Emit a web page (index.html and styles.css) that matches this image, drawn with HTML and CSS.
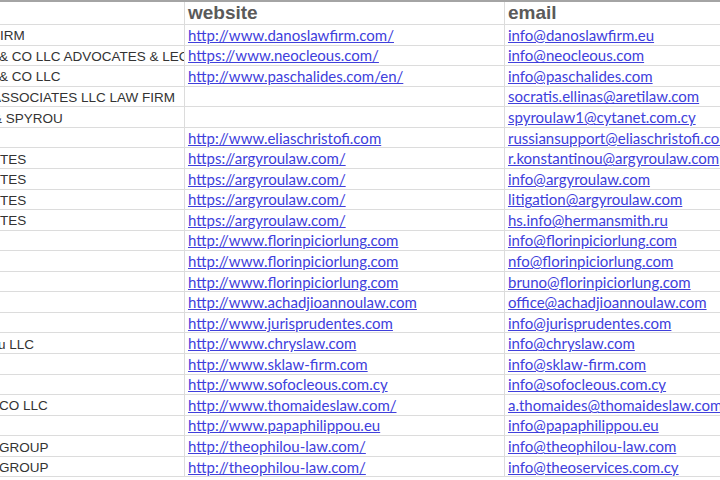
FILE: index.html
```html
<!DOCTYPE html>
<html>
<head>
<meta charset="utf-8">
<link rel="stylesheet" href="styles.css">
</head>
<body>
<div class="sheet">
  <div class="row head"><div class="cell name"></div><div class="cell site">website</div><div class="cell mail">email</div></div>
  <div class="row"><div class="cell name">IRM</div><div class="cell site"><a href="#">http://www.danoslawfirm.com/</a></div><div class="cell mail"><a href="#">info@danoslawfirm.eu</a></div></div>
  <div class="row"><div class="cell name"><span class="s1">&amp; CO LLC ADVOCATES &amp; LEG</span></div><div class="cell site"><a href="#">https://www.neocleous.com/</a></div><div class="cell mail"><a href="#">info@neocleous.com</a></div></div>
  <div class="row"><div class="cell name"><span class="s1">&amp; CO LLC</span></div><div class="cell site"><a href="#">http://www.paschalides.com/en/</a></div><div class="cell mail"><a href="#">info@paschalides.com</a></div></div>
  <div class="row"><div class="cell name"><span class="s8">ASSOCIATES LLC LAW FIRM</span></div><div class="cell site"></div><div class="cell mail"><a href="#">socratis.ellinas@aretilaw.com</a></div></div>
  <div class="row"><div class="cell name"><span class="s6">&amp; SPYROU</span></div><div class="cell site"></div><div class="cell mail"><a href="#">spyroulaw1@cytanet.com.cy</a></div></div>
  <div class="row"><div class="cell name"></div><div class="cell site"><a href="#">http://www.eliaschristofi.com</a></div><div class="cell mail"><a href="#">russiansupport@eliaschristofi.com</a></div></div>
  <div class="row"><div class="cell name">TES</div><div class="cell site"><a href="#">https://argyroulaw.com/</a></div><div class="cell mail"><a href="#">r.konstantinou@argyroulaw.com</a></div></div>
  <div class="row"><div class="cell name">TES</div><div class="cell site"><a href="#">https://argyroulaw.com/</a></div><div class="cell mail"><a href="#">info@argyroulaw.com</a></div></div>
  <div class="row"><div class="cell name">TES</div><div class="cell site"><a href="#">https://argyroulaw.com/</a></div><div class="cell mail"><a href="#">litigation@argyroulaw.com</a></div></div>
  <div class="row"><div class="cell name">TES</div><div class="cell site"><a href="#">https://argyroulaw.com/</a></div><div class="cell mail"><a href="#">hs.info@hermansmith.ru</a></div></div>
  <div class="row"><div class="cell name"></div><div class="cell site"><a href="#">http://www.florinpiciorlung.com</a></div><div class="cell mail"><a href="#">info@florinpiciorlung.com</a></div></div>
  <div class="row"><div class="cell name"></div><div class="cell site"><a href="#">http://www.florinpiciorlung.com</a></div><div class="cell mail"><a href="#">nfo@florinpiciorlung.com</a></div></div>
  <div class="row"><div class="cell name"></div><div class="cell site"><a href="#">http://www.florinpiciorlung.com</a></div><div class="cell mail"><a href="#">bruno@florinpiciorlung.com</a></div></div>
  <div class="row"><div class="cell name"></div><div class="cell site"><a href="#">http://www.achadjioannoulaw.com</a></div><div class="cell mail"><a href="#">office@achadjioannoulaw.com</a></div></div>
  <div class="row"><div class="cell name"></div><div class="cell site"><a href="#">http://www.jurisprudentes.com</a></div><div class="cell mail"><a href="#">info@jurisprudentes.com</a></div></div>
  <div class="row"><div class="cell name"><span class="s2">u LLC</span></div><div class="cell site"><a href="#">http://www.chryslaw.com</a></div><div class="cell mail"><a href="#">info@chryslaw.com</a></div></div>
  <div class="row"><div class="cell name"></div><div class="cell site"><a href="#">http://www.sklaw-firm.com</a></div><div class="cell mail"><a href="#">info@sklaw-firm.com</a></div></div>
  <div class="row"><div class="cell name"></div><div class="cell site"><a href="#">http://www.sofocleous.com.cy</a></div><div class="cell mail"><a href="#">info@sofocleous.com.cy</a></div></div>
  <div class="row"><div class="cell name"><span class="s1">CO LLC</span></div><div class="cell site"><a href="#">http://www.thomaideslaw.com/</a></div><div class="cell mail"><a href="#">a.thomaides@thomaideslaw.com</a></div></div>
  <div class="row"><div class="cell name"></div><div class="cell site"><a href="#">http://www.papaphilippou.eu</a></div><div class="cell mail"><a href="#">info@papaphilippou.eu</a></div></div>
  <div class="row"><div class="cell name"><span class="s1">GROUP</span></div><div class="cell site"><a href="#">http://theophilou-law.com/</a></div><div class="cell mail"><a href="#">info@theophilou-law.com</a></div></div>
  <div class="row"><div class="cell name"><span class="s1">GROUP</span></div><div class="cell site"><a href="#">http://theophilou-law.com/</a></div><div class="cell mail"><a href="#">info@theoservices.com.cy</a></div></div>
</div>
</body>
</html>
```

FILE: styles.css
```css
html, body {
  margin: 0;
  padding: 0;
  background: #ffffff;
  overflow: hidden;
  width: 720px;
  height: 480px;
}

.sheet {
  border-top: 2px solid #a4a4a4;
  width: 720px;
  height: 478px;
  overflow: hidden;
  border-bottom: 1px solid #c8c8c8;
}

.row {
  display: grid;
  grid-template-columns: 185px 320px 1fr;
  height: 20.57px;
}

.row.head {
  height: 23px;
}

.cell {
  box-sizing: border-box;
  border-bottom: 1px solid #dcdcdc;
  white-space: nowrap;
  overflow: hidden;
  display: flex;
  align-items: center;
  min-width: 0;
}

.name, .site {
  border-right: 1px solid #dcdcdc;
}

.name {
  font-family: "Liberation Sans", Arial, sans-serif;
  font-size: 13.5px;
  color: #333333;
  padding-top: 2px;
}

.site {
  padding-left: 3px;
}

.mail {
  padding-left: 3px;
}

.head .cell {
  font-family: "Liberation Sans", Arial, sans-serif;
  font-weight: bold;
  font-size: 19px;
  color: #5a5a5a;
  padding-top: 0;
}

.cell a {
  font-family: Lato, "Open Sans", sans-serif;
  font-size: 15px;
  color: #4040dc;
  text-decoration: underline;
  text-underline-offset: 1px;
}

.s1 { margin-left: -1px; }
.s2 { margin-left: -2px; }
.s6 { margin-left: -7px; }
.s8 { margin-left: -8px; }
```
